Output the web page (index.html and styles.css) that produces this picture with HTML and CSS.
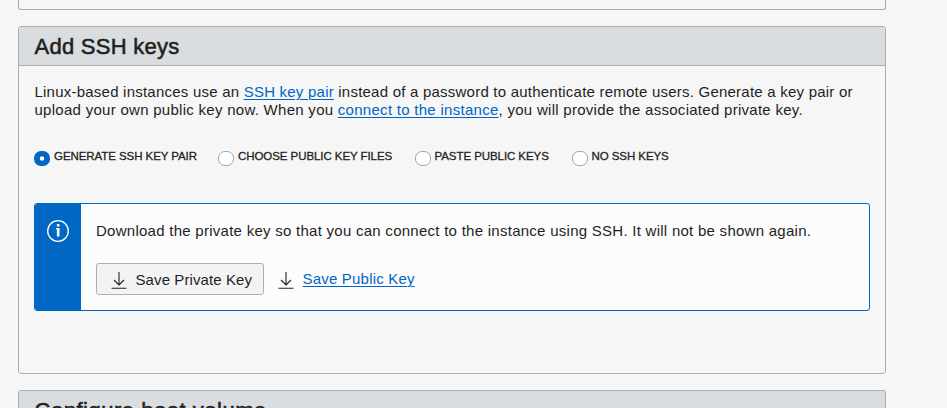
FILE: index.html
```html
<!DOCTYPE html>
<html lang="en">
<head>
<meta charset="utf-8">
<title>Add SSH keys</title>
<link rel="stylesheet" href="styles.css">
</head>
<body>
<main class="page">
  <section class="panel panel-previous"></section>
  <section class="panel panel-keys">
    <h2 class="panel-title">Add SSH keys</h2>
    <div class="panel-body">
      <p class="intro"><span class="line-first">Linux-based instances use an <a href="#">SSH key pair</a> instead of a password to authenticate remote users. Generate a key pair or</span><br><span class="line-second">upload your own public key now. When you <a href="#">connect to the instance</a>, you will provide the associated private key.</span></p>
      <div class="options">
        <label class="option option-generate"><input type="radio" name="key" checked><span>GENERATE SSH KEY PAIR</span></label>
        <label class="option option-choose"><input type="radio" name="key"><span>CHOOSE PUBLIC KEY FILES</span></label>
        <label class="option option-paste"><input type="radio" name="key"><span>PASTE PUBLIC KEYS</span></label>
        <label class="option"><input type="radio" name="key"><span>NO SSH KEYS</span></label>
      </div>
      <div class="notice">
        <div class="notice-side">
          <svg width="24" height="24" viewBox="0 0 24 24" fill="none" stroke="#fff"><circle cx="12" cy="12" r="10.300" stroke-width="1.300"/><path d="M12.200 9v8.500" stroke-width="2.600"/><path d="M10 9.600h2" stroke-width="1.200"/><path d="M12.200 5v2.400" stroke-width="2.600"/></svg>
        </div>
        <div class="notice-body">
          <p class="notice-text">Download the private key so that you can connect to the instance using SSH. It will not be shown again.</p>
          <div class="actions">
            <button class="save-private"><svg class="icon" viewBox="0 0 16 18"><path d="M8 1v13M3 9l5 5 5-5M.5 17.200h15"/></svg><span>Save Private Key</span></button>
            <a class="save-public" href="#"><svg class="icon" viewBox="0 0 16 18"><path d="M8 1v13M3 9l5 5 5-5M.5 17.200h15"/></svg><span>Save Public Key</span></a>
          </div>
        </div>
      </div>
    </div>
  </section>
  <section class="panel panel-next">
    <h2 class="panel-title title-next">Configure boot volume</h2>
  </section>
</main>
</body>
</html>
```
FILE: styles.css
```css
* { box-sizing: border-box; }
body {
  margin: 0;
  height: 408px;
  overflow: hidden;
  background: #f6f6f6;
  color: #1f1f1f;
  font: 15px/18px "Liberation Sans", Arial, sans-serif;
}
.page { width: 868px; height: 408px; margin-left: 18px; display: flex; flex-direction: column; gap: 16px; overflow: hidden; }
.panel { border: 1px solid #a9afb6; border-radius: 3px; overflow: hidden; flex: none; }
.panel-previous { height: 10px; border-top: 0; border-radius: 0 0 3px 3px; }
.panel-keys { height: 348px; }
.panel-next { height: 18px; border-bottom: 0; border-radius: 3px 3px 0 0; }
.panel-title {
  margin: 0;
  height: 39px;
  padding-left: 15.500px;
  border-bottom: 1px solid #a9afb6;
  background: #dadde0;
  font-size: 22px;
  font-weight: 400;
  line-height: 39px;
  letter-spacing: .27px;
  -webkit-text-stroke: .55px #1f1f1f;
}
.title-next { letter-spacing: .52px; }
.panel-body { padding: 17px 15px 0; }
a { color: #0066c5; text-decoration: underline; text-underline-offset: 2px; text-decoration-thickness: 1px; }
p { margin: 0; white-space: nowrap; }
.intro { height: 36px; padding-left: .5px; }
.line-first { letter-spacing: .225px; }
.line-second { letter-spacing: .28px; }
.notice-text { letter-spacing: .265px; }
.options { display: flex; height: 20px; margin-top: 30px; }
.option { display: flex; align-items: flex-start; gap: 4px; font-size: 11.500px; line-height: 14px; letter-spacing: -.07px; white-space: nowrap; -webkit-text-stroke: .3px #1f1f1f; }
.option-generate { width: 184px; }
.option-choose { width: 196.500px; }
.option-paste { width: 157px; }
input { appearance: none; width: 16px; height: 15px; flex: none; margin: 2px 0 0; border: 1px solid #a0a5ae; border-radius: 7px; background: #fff; }
input:checked { border: 0; background: radial-gradient(circle, #fff 0 1.800px, #0067c5 2.600px); }
.notice { display: flex; height: 108px; margin-top: 34px; border: 1px solid #0067c5; border-radius: 3px; background: #fcfcfc; overflow: hidden; }
.notice-side { width: 46px; padding: 15px 0 0 11px; background: #0067c5; }
.notice-body { padding: 18px 15px 0; }
.actions { display: flex; margin-top: 23px; gap: 13.500px; }
.save-private { display: flex; align-items: center; width: 168px; height: 32px; padding: 2px 0 0 13.500px; gap: 9px; border: 1px solid #a9afb6; border-radius: 3px; background: #f3f3f3; color: inherit; font: inherit; letter-spacing: .1px; white-space: nowrap; }
.save-public { display: flex; align-items: center; height: 32px; gap: 9px; letter-spacing: .2px; white-space: nowrap; text-decoration: none; }
.save-public .icon { margin-top: 2px; }
.save-public span { text-decoration: underline; text-underline-offset: 2px; text-decoration-thickness: 1px; }
.icon { width: 16px; height: 18px; fill: none; stroke: #222; stroke-width: 1.100; }
```
